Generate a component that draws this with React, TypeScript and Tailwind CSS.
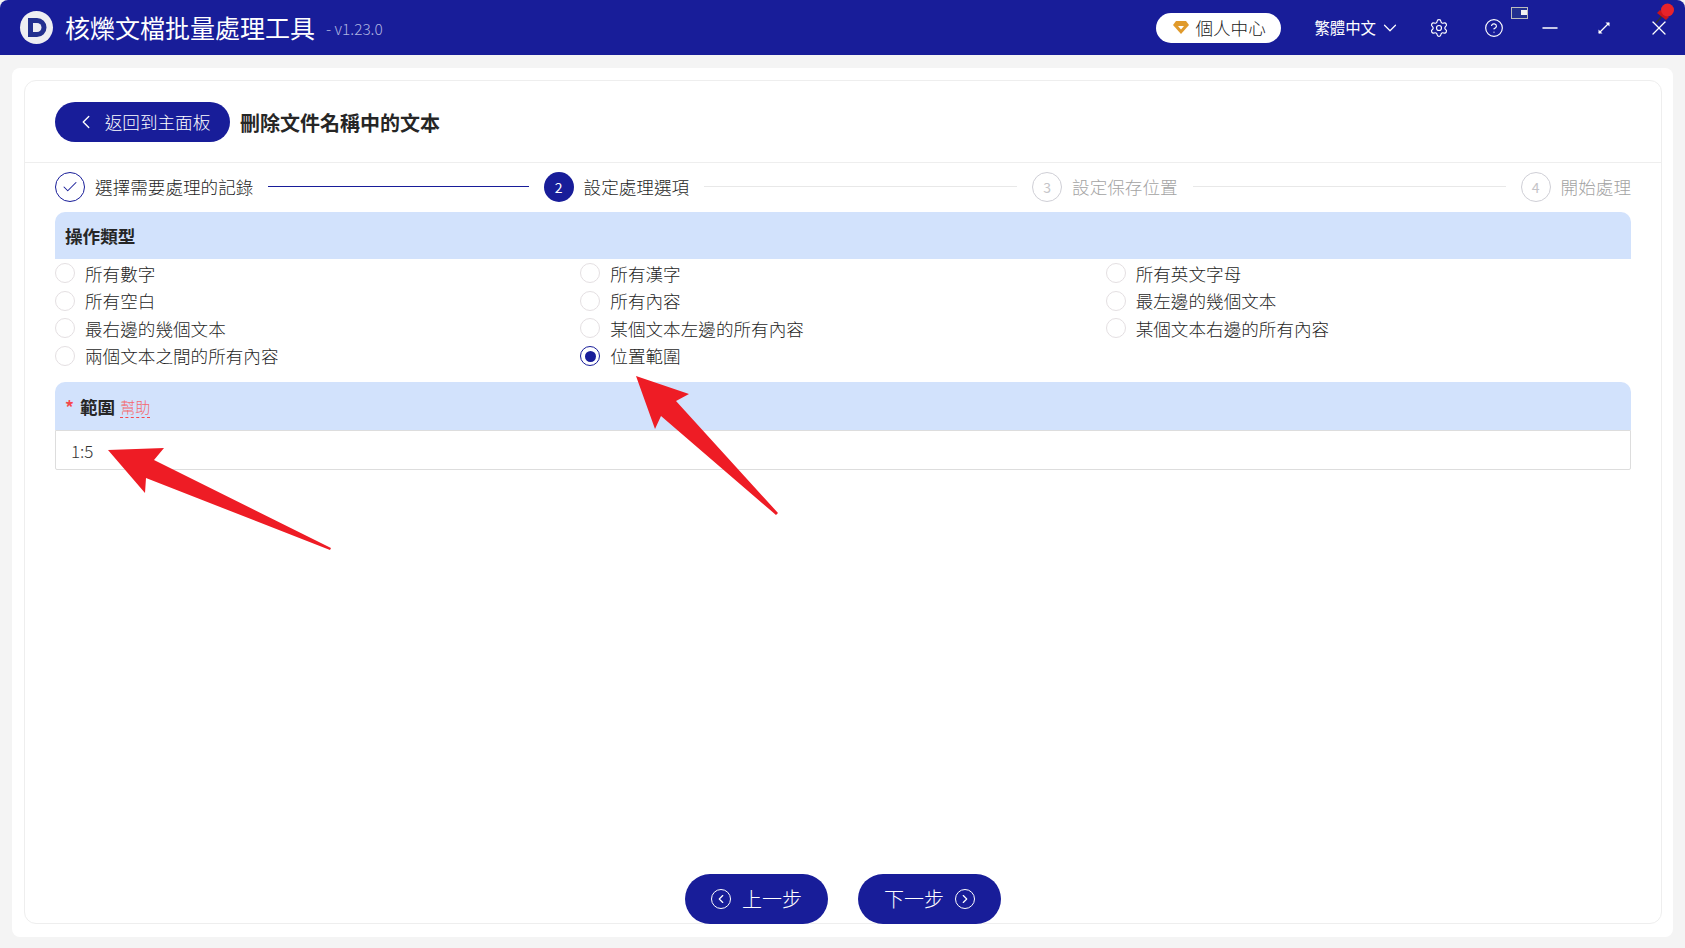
import { Check, ChevronDown, ChevronLeft, ChevronRight, CircleHelp, Minus, Settings, X } from "lucide-react";

const font = { fontFamily: '"Noto Sans CJK TC", "Noto Sans", sans-serif' };

const options = [
  "所有數字", "所有漢字", "所有英文字母",
  "所有空白", "所有內容", "最左邊的幾個文本",
  "最右邊的幾個文本", "某個文本左邊的所有內容", "某個文本右邊的所有內容",
  "兩個文本之間的所有內容", "位置範圍",
];

function Step({ mark, label, state, last }: { mark: React.ReactNode; label: string; state: "done" | "active" | "todo"; last?: boolean }) {
  const circle =
    state === "done"
      ? "border border-[#181d99] text-[#181d99]"
      : state === "active"
      ? "bg-[#181d99] text-white"
      : "border border-[#cfcfd6] text-[#c4c4c8]";
  const text = state === "todo" ? "text-[#a3a3a3]" : "text-[#1f1f1f]";
  const line = state === "done" ? "bg-[#181d99]" : "bg-[#e8e8e8]";
  return (
    <div className={last ? "flex items-center" : "flex flex-1 items-center"}>
      <div className={`flex h-[30px] w-[30px] shrink-0 items-center justify-center rounded-full text-[14px] ${circle}`}>{mark}</div>
      <span className={`ml-[10px] whitespace-nowrap text-[17.6px] font-light leading-none ${text}`}>{label}</span>
      {!last && <div className={`mb-[1px] ml-[15px] mr-[15px] h-px flex-1 ${line}`} />}
    </div>
  );
}

function Radio({ label, checked }: { label: string; checked?: boolean }) {
  return (
    <div className="flex h-[27.6px] items-center">
      <div className={`flex h-[20px] w-[20px] items-center justify-center rounded-full border bg-white ${checked ? "border-[#181d99]" : "border-[#e4dfe2]"}`}>
        {checked && <div className="h-[11px] w-[11px] rounded-full bg-[#181d99]" />}
      </div>
      <span className="ml-[10px] text-[17.6px] font-light leading-none text-[#1f1f1f]">{label}</span>
    </div>
  );
}

function PillButton({ children }: { children: React.ReactNode }) {
  return (
    <button className="flex h-[50px] w-[143px] items-center justify-center gap-[11px] rounded-full bg-[#181d99] text-[20px] font-light text-white">
      {children}
    </button>
  );
}

export default function App() {
  return (
    <div style={font} className="relative flex h-[948px] w-[1685px] flex-col overflow-hidden bg-[#f4f4f4]">
      <header className="flex h-[55px] shrink-0 items-center rounded-t-lg bg-[#181d99] pl-[19px] text-white">
        <svg width="35" height="35" viewBox="0 0 35 35" className="shrink-0">
          <circle cx="17.5" cy="17.5" r="16.5" fill="#eeeef2" />
          <path d="M9 8h9a9.5 9.5 0 0 1 0 19H9z" fill="#23308f" />
          <path d="M14 13h4a4.5 4.5 0 0 1 0 9h-4z" fill="#eeeef2" />
        </svg>
        <span className="ml-[11px] whitespace-nowrap text-[25px] leading-none">核爍文檔批量處理工具</span>
        <span className="ml-[11px] mt-[3px] whitespace-nowrap text-[15.4px] font-light leading-none text-[#aeb4e0]">- v1.23.0</span>
        <div className="ml-auto flex items-center">
          <div className="flex h-[30px] w-[125px] items-center rounded-full bg-white pl-[16px] text-[#222]">
            <svg width="18" height="15" viewBox="0 0 18 15">
              <path d="M4 1h10l3 4-8 9-8-9z" fill="#e09a2b" />
              <path d="M6 6h6l-3 3.4z" fill="#fff" />
            </svg>
            <span className="ml-[5px] whitespace-nowrap text-[17.6px] font-light leading-none">個人中心</span>
          </div>
          <span className="ml-[33px] whitespace-nowrap text-[15.4px] leading-none">繁體中文</span>
          <ChevronDown size={22} strokeWidth={1.3} className="ml-[3px]" />
          <Settings size={20} strokeWidth={1.4} className="ml-[28px]" />
          <CircleHelp size={20} strokeWidth={1.4} className="ml-[35px]" />
          <Minus size={24} strokeWidth={1.5} className="ml-[34px]" />
          <svg width="16" height="16" viewBox="0 0 16 16" className="ml-[34px]" fill="none">
            <path d="M3 13 13 3" stroke="#fff" strokeWidth="1.3" />
            <path d="M9.5 2.5h4v4zM2.5 9.5v4h4z" fill="#fff" />
          </svg>
          <X size={24} strokeWidth={1.3} className="ml-[35px] mr-[14px]" />
        </div>
      </header>

      <svg width="17" height="12" viewBox="0 0 17 12" className="absolute left-[1511px] top-[7px]">
        <rect x=".5" y=".5" width="16" height="11" fill="#23308f" stroke="#bdbdbd" />
        <rect x="10" y="3" width="6" height="5" fill="#f2f2f2" />
      </svg>
      <svg width="22" height="24" viewBox="0 0 22 24" className="absolute left-[1654px] top-[1px]">
        <path d="M2 22 8 15" stroke="#333" strokeWidth="1.6" />
        <path d="M6 9 15 16 12 19 3 12z" fill="#c9141b" />
        <circle cx="13.5" cy="9" r="6.5" fill="#e8232a" />
      </svg>

      <main className="ml-[12px] mr-[12px] mb-[11px] mt-[13px] flex-1 rounded-lg bg-white pl-[12px] pr-[11px] pb-[13px] pt-[12px]">
        <div className="flex h-full flex-col rounded-xl border border-[#eeeeee] bg-white">
          <div className="flex h-[82px] shrink-0 items-center border-b border-[#eeeeee] pl-[30px] pt-[1px]">
            <button className="flex h-[40px] w-[175px] items-center justify-center gap-[8px] rounded-full bg-[#181d99] text-[17.6px] font-light text-white">
              <ChevronLeft size={22} strokeWidth={1.5} />
              返回到主面板
            </button>
            <h1 className="ml-[10px] pt-[1px] text-[20px] font-bold leading-none text-[#262626]">刪除文件名稱中的文本</h1>
          </div>

          <div className="flex flex-1 flex-col px-[30px]">
            <div className="flex h-[49px] shrink-0 items-center pb-[1px]">
              <Step mark={<Check size={18} strokeWidth={1.4} />} label="選擇需要處理的記錄" state="done" />
              <Step mark="2" label="設定處理選項" state="active" />
              <Step mark="3" label="設定保存位置" state="todo" />
              <Step mark="4" label="開始處理" state="todo" last />
            </div>

            <div className="flex h-[47px] shrink-0 items-center rounded-t-[10px] bg-[#d2e2fc] pl-[10px] pt-[2px] text-[17.6px] font-bold text-[#262626]">操作類型</div>
            <div className="grid shrink-0 grid-cols-3 pt-[0.5px]">
              {options.map((o) => (
                <Radio key={o} label={o} checked={o === "位置範圍"} />
              ))}
            </div>

            <div className="mt-[12.5px] flex h-[48px] shrink-0 items-center rounded-t-[10px] bg-[#d2e2fc] pl-[10px]">
              <span className="text-[17.6px] font-bold leading-none text-[#f5484d]">*</span>
              <span className="ml-[6px] text-[17.6px] font-bold leading-none text-[#262626]">範圍</span>
              <span className="ml-[5px] mt-[2px] border-b border-dashed border-[#f5484d] text-[15px] font-light leading-[20px] text-[#f5686c]">幫助</span>
            </div>
            <div className="flex h-[40px] shrink-0 items-center rounded-b-[2px] border border-[#dddddd] pl-[15px] text-[17px] font-light leading-none text-[#333]">1:5</div>

            <div className="mt-auto flex translate-y-[1px] justify-center gap-[30px]">
              <PillButton>
                <span className="flex h-[20px] w-[20px] items-center justify-center rounded-full border border-white"><ChevronLeft size={14} strokeWidth={2} /></span>
                上一步
              </PillButton>
              <PillButton>
                下一步
                <span className="flex h-[20px] w-[20px] items-center justify-center rounded-full border border-white"><ChevronRight size={14} strokeWidth={2} /></span>
              </PillButton>
            </div>
          </div>
        </div>
      </main>

      <svg width="1685" height="948" viewBox="0 0 1685 948" className="pointer-events-none absolute left-0 top-0">
        <polygon points="108,450 164,448 154,460 331,548 330,550 146,478 145,493" fill="#ee1c25" />
        <polygon points="636,376 689,394 676,401 778,513 776,515 661,416 655,429" fill="#ee1c25" />
      </svg>
    </div>
  );
}
